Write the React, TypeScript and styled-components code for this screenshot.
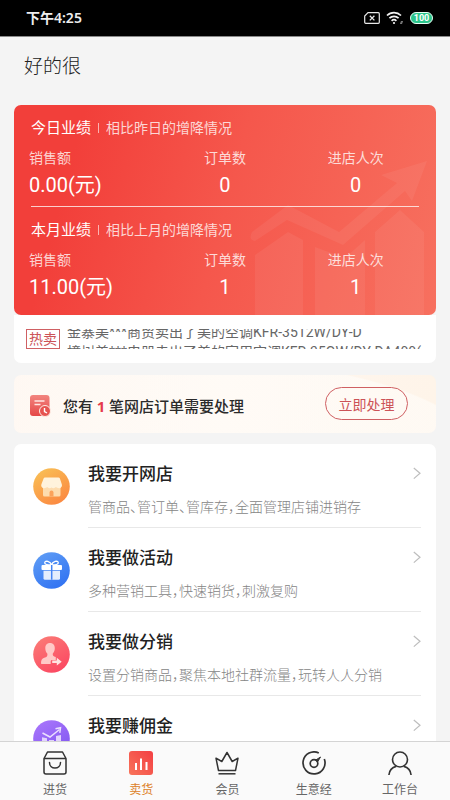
import React, { useState } from "react";
import styled, { createGlobalStyle, css } from "styled-components";

const GlobalStyle = createGlobalStyle`
  *, *::before, *::after { box-sizing: border-box; }
  html, body { margin: 0; padding: 0; }
  body {
    background: #f4f4f4;
    color: #2b2b2b;
    font-family: Roboto, "Noto Sans CJK SC", sans-serif;
    font-size: 14px;
  }
  h1, h2, h3, p, ul, dl, dd { margin: 0; padding: 0; font-weight: 400; }
  ul { list-style: none; }
  button { font: inherit; }
`;

const Screen = styled.div`
  display: flex;
  flex-direction: column;
  height: 100vh;
`;

const StatusBar = styled.header`
  flex: none;
  display: flex;
  align-items: center;
  justify-content: space-between;
  height: 37px;
  padding: 0 17px 0 26px;
  background: #000;
  border-bottom: 1px solid #8a8a8a;
  color: #eee;
`;

const Clock = styled.time`
  font: 600 14px/20px "Noto Sans", "Noto Sans CJK SC", sans-serif;
`;

const StatusIcons = styled.div`
  display: flex;
  align-items: center;
  gap: 6px;
  svg { display: block; }
`;

const Battery = styled.span`
  display: flex;
  align-items: center;
  justify-content: center;
  width: 23px;
  height: 12px;
  border: 1px solid #e6fff4;
  border-radius: 6px;
  background: #2bc48a;
  color: #fff;
  font: 700 9px/10px Roboto, sans-serif;
`;

const Content = styled.main`
  flex: 1;
  min-height: 0;
  overflow-y: auto;
  scrollbar-width: none;
  padding: 0 14px 16px;
`;

const StoreName = styled.h1`
  padding: 16px 10px 24px;
  font-size: 19px;
  line-height: 28px;
  font-weight: 300;
  color: #222;
`;

const StatsCard = styled.section`
  position: relative;
  overflow: hidden;
  padding: 0 15px 15px;
  border-radius: 7px;
  background: linear-gradient(105deg, #f23f3a 15%, #f5574c 50%, #f7705f 100%);
  color: #fff;
`;

const CardArt = styled.svg`
  position: absolute;
  right: 0;
  bottom: 0;
`;

const Period = styled.section<{ $divided?: boolean }>`
  position: relative;
  padding-top: 12px;
  ${(p) =>
    p.$divided &&
    css`
      &::after {
        content: "";
        display: block;
        height: 1px;
        margin: 8px 2px 0;
        background: rgba(255, 255, 255, 0.75);
      }
    `}
`;

const PeriodHead = styled.div`
  display: flex;
  align-items: center;
  gap: 7px;
  padding-left: 2px;
  margin-bottom: 9px;
  line-height: 22px;
`;

const PeriodTitle = styled.h2`
  font-size: 15px;
`;

const Bar = styled.span`
  width: 1px;
  height: 10px;
  background: rgba(255, 255, 255, 0.6);
`;

const PeriodNote = styled.p`
  font-size: 14px;
  color: rgba(255, 255, 255, 0.78);
`;

const Metrics = styled.dl`
  display: grid;
  grid-template-columns: repeat(3, 1fr);
`;

const Metric = styled.div`
  text-align: center;
  &:first-child { text-align: left; }
`;

const MetricLabel = styled.dt`
  font-size: 14px;
  line-height: 20px;
  color: rgba(255, 255, 255, 0.78);
`;

const MetricValue = styled.dd`
  padding-top: 4px;
  font-size: 20px;
  line-height: 26px;
`;

const HotSale = styled.section`
  display: flex;
  align-items: center;
  gap: 7px;
  height: 48px;
  padding: 0 12px;
  border-radius: 0 0 7px 7px;
  background: #fff;
`;

const HotTag = styled.span`
  flex: none;
  padding: 0 2px;
  border: 1px solid #cf6063;
  color: #cc5357;
  font-size: 14px;
  line-height: 18px;
`;

const TickerWindow = styled.div`
  flex: 1;
  min-width: 0;
  height: 20px;
  overflow: hidden;
`;

const TickerLine = styled.li`
  white-space: nowrap;
  font-size: 14px;
  line-height: 20px;
  color: #666;
`;

const Notice = styled.section`
  display: flex;
  align-items: center;
  height: 58px;
  margin: 12px 0 11px;
  padding: 4px 28px 0 16px;
  border-radius: 7px;
  background:
    radial-gradient(ellipse 330px 98px at 136px 78px, rgba(255, 253, 250, 0.6) 99%, transparent 100%),
    linear-gradient(90deg, #fef1e8, #fff7f0 50%, #fef4e9);
`;

const NoticeText = styled.p`
  flex: 1;
  padding-left: 12px;
  font-size: 15px;
  line-height: 22px;
  font-weight: 500;
`;

const Count = styled.strong`
  color: #e5394c;
  font-family: "Noto Sans", sans-serif;
  font-weight: 700;
`;

const PillButton = styled.button`
  align-self: flex-start;
  width: 83px;
  height: 33px;
  margin-top: 8px;
  padding: 0;
  border: 1px solid #cf6063;
  border-radius: 17px;
  background: transparent;
  color: #cc5357;
  font-size: 14px;
  cursor: pointer;
`;

const Menu = styled.ul`
  border-radius: 7px;
  background: #fff;
`;

const MenuLink = styled.a`
  display: flex;
  align-items: center;
  gap: 18px;
  height: 84px;
  padding: 0 15px 0 19px;
  color: inherit;
  text-decoration: none;
  > svg { flex: none; }
`;

const MenuBody = styled.div`
  flex: 1;
  align-self: stretch;
  padding-top: 18px;
  border-bottom: 1px solid #e8e8e8;
`;

const MenuHead = styled.div`
  display: flex;
  align-items: center;
  justify-content: space-between;
  margin-bottom: 9px;
`;

const MenuTitle = styled.h3`
  font-size: 17px;
  line-height: 24px;
  font-weight: 500;
  color: #222;
`;

const MenuNote = styled.p`
  font-family: "Noto Sans CJK SC", sans-serif;
  font-size: 14px;
  line-height: 22px;
  font-weight: 300;
  color: #858585;
  font-feature-settings: "halt";
`;

const TabBar = styled.nav`
  flex: none;
  display: grid;
  grid-template-columns: repeat(5, 1fr);
  height: 59px;
  padding: 0 7px 0 12px;
  border-top: 1px solid #d4d4d4;
  background: #fafafa;
`;

const Tab = styled.a<{ $active?: boolean }>`
  display: flex;
  flex-direction: column;
  align-items: center;
  gap: 6px;
  padding-top: 9px;
  color: ${(p) => (p.$active ? "#dd8127" : "#666")};
  font-size: 12px;
  line-height: 18px;
  text-decoration: none;
`;

type MetricData = { label: string; value: string };
type PeriodData = { title: string; note: string; metrics: MetricData[] };

const periods: PeriodData[] = [
  {
    title: "今日业绩",
    note: "相比昨日的增降情况",
    metrics: [
      { label: "销售额", value: "0.00(元)" },
      { label: "订单数", value: "0" },
      { label: "进店人次", value: "0" },
    ],
  },
  {
    title: "本月业绩",
    note: "相比上月的增降情况",
    metrics: [
      { label: "销售额", value: "11.00(元)" },
      { label: "订单数", value: "1" },
      { label: "进店人次", value: "1" },
    ],
  },
];

const sales = [
  "金寨美***商贸卖出了美的空调KFR-3512W/DY-D",
  "樟树美***电器卖出了美的家用空调KFR-35GW/DY-DA400(",
];

const Disc = ({ id, from, to, children }: { id: string; from: string; to: string; children: React.ReactNode }) => (
  <svg width="37" height="37" viewBox="0 0 37 37" aria-hidden="true">
    <defs>
      <linearGradient id={id} x1="0.2" y1="0" x2="0.8" y2="1">
        <stop offset="0" stopColor={from} />
        <stop offset="1" stopColor={to} />
      </linearGradient>
    </defs>
    <circle cx="18.5" cy="18.5" r="18.3" fill={`url(#${id})`} />
    {children}
  </svg>
);

const ShopIcon = () => (
  <Disc id="shop" from="#f9bf55" to="#fb8640">
    <path d="M10 17h17.500v10a1.500 1.500 0 0 1-1.500 1.500H11.500A1.500 1.500 0 0 1 10 27z" fill="#fddcae" />
    <path d="M16.500 28.500v-4a2 2 0 0 1 4 0v4z" fill="#fba35b" />
    <path d="M12 9.500h13.500a1.500 1.500 0 0 1 1.400 1l1.900 5.700c.7 2-.8 4-2.800 4-1.300 0-2.300-.5-3-1.100-.8.700-1.700 1.100-2.500 1.100s-1.400-.3-2-.8c-.6.5-1.200.8-2 .8-.9 0-1.700-.400-2.400-1.100-.7.600-1.600 1.100-2.900 1.100-2 0-3.500-2-2.800-4l2.200-5.700a1.500 1.500 0 0 1 1.400-1z" fill="#fff3dc" />
  </Disc>
);

const GiftIcon = () => (
  <Disc id="gift" from="#5e9cf5" to="#2f71f2">
    <path d="M18.500 13c-1-3.800-6.500-5-6.800-2.200-.1 1.600 2.500 2.200 6.800 2.200zm0 0c1-3.800 6.500-5 6.800-2.200.1 1.600-2.500 2.200-6.800 2.200z" fill="none" stroke="#fff" strokeWidth="1.300" />
    <rect x="8.500" y="13" width="20.500" height="5" rx="1" fill="#fff" />
    <path d="M10.500 18.700h16.500v7.500a1.500 1.500 0 0 1-1.500 1.500H12a1.500 1.500 0 0 1-1.500-1.500z" fill="#e3edfd" />
    <path d="M18.700 13v14.700" stroke="#4384f4" strokeWidth="1.500" />
  </Disc>
);

const ReferIcon = () => (
  <Disc id="refer" from="#fb7a76" to="#fb4661">
    <path d="M17 7c3.200 0 4.800 2.200 4.800 5.200 0 2.300-.9 4.200-2 5.300-.3 2 .4 2.800 3 3.600v3h-3.600c-1 0-1.500.6-1.500 1.400V28H9c-.7 0-1-.4-1-1 .1-3.200 1-4.500 3.200-5.200 2.700-.9 3.400-1.600 3.200-4.100-1.200-1.200-2.100-3.200-2.100-5.500C12.300 9.200 13.800 7 17 7z" fill="#ffc9c7" />
    <path d="M19.200 24.500h4.600v-2.700l4.900 3.900-4.900 3.800v-2.600h-4.600z" fill="#ffe3e1" />
  </Disc>
);

const ProfitIcon = () => (
  <Disc id="profit" from="#a875fb" to="#7f55f0">
    <path d="M9.500 13l7.500 4L26.500 9.500" fill="none" stroke="#eadffe" strokeWidth="1.500" />
    <path d="M22.500 8.800l5-1-.7 5" fill="none" stroke="#eadffe" strokeWidth="1.500" />
    <path d="M9 17.200l5 1v11H9zM16 20h5v8h-5zM23 16l5-1V28h-5z" fill="#e2d3fd" />
  </Disc>
);

const OrderIcon = () => (
  <svg width="21" height="22" viewBox="0 0 21 22" aria-hidden="true">
    <defs>
      <linearGradient id="order" x1="0" y1="0" x2="0" y2="1">
        <stop offset="0" stopColor="#f2857f" />
        <stop offset="1" stopColor="#e54848" />
      </linearGradient>
    </defs>
    <rect width="19.500" height="21" rx="3" fill="url(#order)" />
    <path d="M4.500 6h10M4.500 9.500h6" stroke="#ffe6e2" strokeWidth="1.600" />
    <circle cx="15" cy="16" r="5.500" fill="#e65451" stroke="#fdeee6" />
    <path d="M14.500 13v3.500l2.500 1.500" fill="none" stroke="#fff" strokeWidth="1.400" />
  </svg>
);

const Chevron = () => (
  <svg width="8" height="14" viewBox="0 0 8 14" aria-hidden="true">
    <path d="M.8 1L7 6.300.8 11.600" fill="none" stroke="#bdbdbd" strokeWidth="1.200" />
  </svg>
);

const menu = [
  { title: "我要开网店", note: "管商品、管订单、管库存\uFF0C全面管理店铺进销存", icon: <ShopIcon /> },
  { title: "我要做活动", note: "多种营销工具\uFF0C快速销货\uFF0C刺激复购", icon: <GiftIcon /> },
  { title: "我要做分销", note: "设置分销商品\uFF0C聚焦本地社群流量\uFF0C玩转人人分销", icon: <ReferIcon /> },
  { title: "我要赚佣金", note: "", icon: <ProfitIcon /> },
];

const TabIcon = ({ children }: { children: React.ReactNode }) => (
  <svg width="24" height="24" viewBox="0 0 24 24" fill="none" stroke="#333" strokeWidth="1.500" strokeLinejoin="round" aria-hidden="true">
    {children}
  </svg>
);

const tabs = [
  {
    label: "进货",
    icon: (
      <TabIcon>
        <path d="M1 7.500L4.500 1h15L23 7.500V21a2 2 0 0 1-2 2H3a2 2 0 0 1-2-2zM1 7.500h22" />
        <path d="M6.500 11.500c0 7.300 11 7.300 11 0" strokeLinecap="round" />
      </TabIcon>
    ),
  },
  {
    label: "卖货",
    active: true,
    icon: (
      <TabIcon>
        <defs>
          <linearGradient id="sell" x1="0" y1="1" x2="1" y2="0">
            <stop offset="0" stopColor="#f8745a" />
            <stop offset="1" stopColor="#f33e42" />
          </linearGradient>
        </defs>
        <rect width="24" height="24" rx="3" fill="url(#sell)" stroke="none" />
        <path d="M7 12v7M12 7.500V19M17.500 11v8" stroke="#fff" strokeWidth="2" />
      </TabIcon>
    ),
  },
  {
    label: "会员",
    icon: (
      <TabIcon>
        <path d="M3.500 19.500L1 7.200l5.800 3.300L12 1.500l5.200 9L23 7.200l-2.500 12.300z" />
        <path d="M3.500 22.800h17" />
      </TabIcon>
    ),
  },
  {
    label: "生意经",
    icon: (
      <TabIcon>
        <path d="M16.800 2A11 11 0 1 0 22.300 8" strokeWidth="1.700" />
        <circle cx="12" cy="12.500" r="3.800" strokeWidth="1.700" />
        <path d="M13.500 9.200L18.500 6l-3 5z" fill="#333" strokeWidth="1" />
      </TabIcon>
    ),
  },
  {
    label: "工作台",
    icon: (
      <TabIcon>
        <circle cx="12" cy="8.500" r="7.500" strokeWidth="1.600" />
        <path d="M.9 24c.5-5 3.800-7.800 7.300-8.600M23.100 24c-.5-5-3.800-7.800-7.300-8.600" strokeWidth="1.600" />
      </TabIcon>
    ),
  },
];

export default function App() {
  const [tickerScroll] = useState(7);

  return (
    <Screen>
      <GlobalStyle />
      <StatusBar>
        <Clock>下午4:25</Clock>
        <StatusIcons>
          <svg width="16" height="12" viewBox="0 0 16 12" fill="none" stroke="#e8e8e8" aria-hidden="true">
            <path d="M4 .7h10.300a1 1 0 0 1 1 1v8.600a1 1 0 0 1-1 1H1.700a1 1 0 0 1-1-1V4z" strokeWidth="1.200" />
            <path d="M5.800 3.800l4.600 4.600m0-4.600L5.800 8.400" strokeWidth="1.300" />
          </svg>
          <svg width="18" height="14" viewBox="0 0 18 14" fill="none" stroke="#f2f2f2" strokeWidth="1.700" aria-hidden="true">
            <path d="M1 4.500a10 10 0 0 1 14 0M3.400 7.200a6.600 6.600 0 0 1 9.200 0M5.600 9.800a3.500 3.500 0 0 1 4.800 0" />
            <circle cx="8" cy="12" r="1.100" fill="#f2f2f2" stroke="none" />
            <path d="M14.500 13l1-3m0 3l1-3" stroke="#aaa" strokeWidth=".8" />
          </svg>
          <Battery>100</Battery>
        </StatusIcons>
      </StatusBar>

      <Content>
        <StoreName>好的很</StoreName>

        <StatsCard>
          <CardArt width="190" height="160" viewBox="0 0 190 160" fill="#fff" fillOpacity="0.060" aria-hidden="true">
            <path d="M9 100L42 77l15 8v75H9zM69 92l30 11 20-18v75H69zM129 77l25-22 24 22v83h-49z" />
            <path d="M181 6L135 20l16 8-58 49-51-27L6 77q-4 8 3 9l32-21 56 25 62-54 7 10z" />
          </CardArt>
          {periods.map((p, i) => (
            <Period key={p.title} $divided={i === 0}>
              <PeriodHead>
                <PeriodTitle>{p.title}</PeriodTitle>
                <Bar />
                <PeriodNote>{p.note}</PeriodNote>
              </PeriodHead>
              <Metrics>
                {p.metrics.map((m) => (
                  <Metric key={m.label}>
                    <MetricLabel>{m.label}</MetricLabel>
                    <MetricValue>{m.value}</MetricValue>
                  </Metric>
                ))}
              </Metrics>
            </Period>
          ))}
        </StatsCard>

        <HotSale>
          <HotTag>热卖</HotTag>
          <TickerWindow>
            <ul style={{ transform: `translateY(${-tickerScroll}px)` }}>
              {sales.map((s) => (
                <TickerLine key={s}>{s}</TickerLine>
              ))}
            </ul>
          </TickerWindow>
        </HotSale>

        <Notice>
          <OrderIcon />
          <NoticeText>
            您有 <Count>1</Count> 笔网店订单需要处理
          </NoticeText>
          <PillButton type="button">立即处理</PillButton>
        </Notice>

        <Menu>
          {menu.map((m) => (
            <li key={m.title}>
              <MenuLink href="#">
                {m.icon}
                <MenuBody>
                  <MenuHead>
                    <MenuTitle>{m.title}</MenuTitle>
                    <Chevron />
                  </MenuHead>
                  {m.note && <MenuNote>{m.note}</MenuNote>}
                </MenuBody>
              </MenuLink>
            </li>
          ))}
        </Menu>
      </Content>

      <TabBar>
        {tabs.map((t) => (
          <Tab key={t.label} href="#" $active={t.active} aria-current={t.active ? "page" : undefined}>
            {t.icon}
            <span>{t.label}</span>
          </Tab>
        ))}
      </TabBar>
    </Screen>
  );
}
